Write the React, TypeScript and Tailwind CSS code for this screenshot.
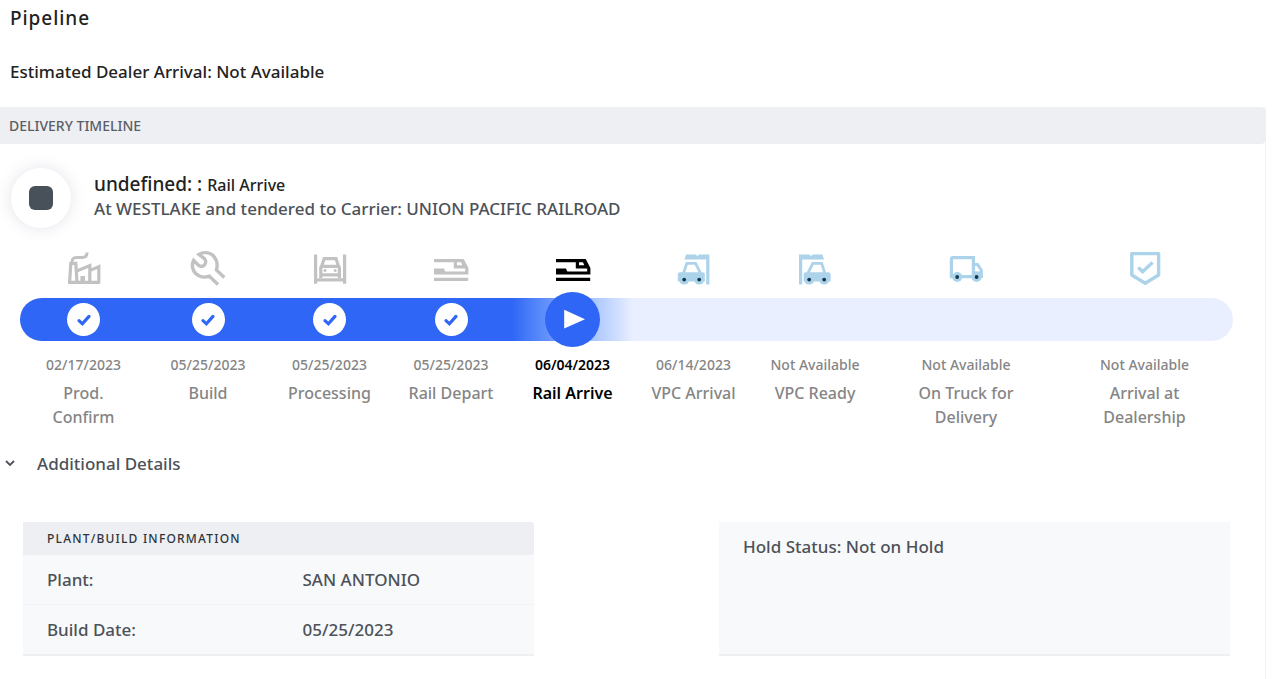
import type { ReactNode } from "react";

const iconClass = "h-9 w-9";

function FactoryIcon() {
  return (
    <svg viewBox="0 0 36 36" className={iconClass} fill="none" stroke="currentColor" strokeWidth="3.2" aria-hidden="true">
      <path d="M2 32.4H34.2M3.6 32.4L4.8 13.4H9.8L11 32.4M10.8 21L23.8 15.6V32.4M23.8 20.6L32.8 16.6V32.4" />
      <path d="M6.4 13.4C5.6 9.5 7 7.6 10 7.4H16.5C19.5 7.4 21 6 21 2.6" strokeWidth="3" />
      <path d="M14.4 26H19V32H14.4Z" fill="currentColor" stroke="none" />
    </svg>
  );
}

function WrenchIcon() {
  return (
    <svg viewBox="0 0 36 36" className={iconClass} fill="none" stroke="currentColor" strokeWidth="3.4" aria-hidden="true">
      <path d="M34.3 27.6L26.4 20C28.4 13 26 6.4 20.4 3.8C16.6 2.2 12.4 2.4 9 4.4L14.6 8.8C16.4 11 15.8 13.6 14.4 15C12.8 16.6 10.6 16.8 8.8 15.4L3.6 10.4C1.4 14.6 2.2 20.4 6 23.8C9.6 27 14.8 27.8 19.4 26.2L28 34.4" />
    </svg>
  );
}

function ProcessingIcon() {
  return (
    <svg viewBox="0 0 36 36" className={iconClass} fill="none" stroke="currentColor" strokeWidth="3.2" aria-hidden="true">
      <path d="M3.6 4.4V33.8M32.6 4.4V33.8M3.6 29.8H32.6" />
      <path d="M9.6 16.4L12.2 8.6H24L26.6 16.4M8.8 28V18C8.8 17 9.6 16.4 10.6 16.4H25.6C26.6 16.4 27.4 17 27.4 18V28M8.8 24.8H27.4" />
      <circle cx="13" cy="20.6" r="1.5" fill="currentColor" stroke="none" />
      <circle cx="23.2" cy="20.6" r="1.5" fill="currentColor" stroke="none" />
    </svg>
  );
}

function TrainIcon() {
  return (
    <svg viewBox="0 0 36 36" className={iconClass} fill="none" stroke="currentColor" strokeWidth="3.2" aria-hidden="true">
      <path d="M1 10.6H29.8L33.8 18.5V23H1" />
      <path d="M22.4 10.6V16.8H32M1 29.4H35.2" />
      <path d="M28.4 10.6L31 16.8" strokeWidth="2" />
      <path d="M1 18.6H11L12.4 22V24H1Z" fill="currentColor" stroke="none" />
    </svg>
  );
}

function CarBayShape() {
  return (
    <>
      <path d="M8.4 9.6L10 4.4H20L21.4 6.2L23 4.4H33.4V34.6H30.2V9.6Z" fill="currentColor" />
      <path d="M7.6 23L10.8 13.4H19.6L24.4 23" fill="none" stroke="currentColor" strokeWidth="2.8" />
      <path d="M1.8 31.6V24.5C1.8 23 2.8 22.2 4 22.2H26.4C28 22.2 28.8 23 28.8 24.5V31.6Z" fill="currentColor" />
      <circle cx="8.2" cy="29.6" r="5" fill="currentColor" />
      <circle cx="23.2" cy="29.6" r="5" fill="currentColor" />
      <circle cx="8.2" cy="29.6" r="1.9" fill="#12384f" />
      <circle cx="23.2" cy="29.6" r="1.9" fill="#12384f" />
    </>
  );
}

function ArrivalBayIcon() {
  return (
    <svg viewBox="0 0 36 36" className={iconClass} aria-hidden="true">
      <CarBayShape />
    </svg>
  );
}

function ReadyBayIcon() {
  return (
    <svg viewBox="0 0 36 36" className={iconClass} aria-hidden="true">
      <g transform="translate(35.4 0) scale(-1 1)">
        <CarBayShape />
      </g>
    </svg>
  );
}

function TruckIcon() {
  return (
    <svg viewBox="0 0 36 36" className={iconClass} aria-hidden="true">
      <path d="M8 26.6H3.4V9.4C3.4 8.2 4 7.7 5 7.7H25.4V26.6H8" fill="none" stroke="currentColor" strokeWidth="3.2" />
      <path d="M25.4 14.4H29.6L33.4 20.4V26.6H25.4" fill="none" stroke="currentColor" strokeWidth="3" />
      <path d="M26 21.4H34V27H26Z" fill="currentColor" />
      <circle cx="9.2" cy="27" r="5" fill="currentColor" />
      <circle cx="28.6" cy="27" r="5" fill="currentColor" />
      <circle cx="9.2" cy="27" r="1.9" fill="#12384f" />
      <circle cx="28.6" cy="27" r="1.9" fill="#12384f" />
    </svg>
  );
}

function ShieldIcon() {
  return (
    <svg viewBox="0 0 36 36" className={iconClass} fill="none" stroke="currentColor" strokeWidth="3.4" aria-hidden="true">
      <path d="M4.8 3.6H31.6V25L18.2 33.2L4.8 25Z" strokeLinejoin="round" />
      <path d="M11.2 17.6L15.6 21.6L25.6 12.6" />
    </svg>
  );
}

function CheckBadge() {
  return (
    <span className="flex size-[33px] items-center justify-center rounded-full bg-white text-[#2f66f5]">
      <svg viewBox="0 0 16 16" className="size-4" fill="none" stroke="currentColor" strokeWidth="3.2" role="img" aria-label="Completed">
        <path d="M3 8.6L6.4 11.8L13 4.4" strokeLinecap="round" />
      </svg>
    </span>
  );
}

function PlayBadge() {
  return (
    <span className="flex size-[55px] shrink-0 items-center justify-center rounded-full bg-[#2f66f5] text-white">
      <svg viewBox="0 0 24 24" className="size-6" fill="currentColor" role="img" aria-label="Current step">
        <path d="M3.2 1.8L24 11.2L3.2 20.6Z" />
      </svg>
    </span>
  );
}

type State = "done" | "current" | "upcoming";

const steps: { date: string; label: string; state: State; icon: ReactNode }[] = [
  { date: "02/17/2023", label: "Prod. Confirm", state: "done", icon: <FactoryIcon /> },
  { date: "05/25/2023", label: "Build", state: "done", icon: <WrenchIcon /> },
  { date: "05/25/2023", label: "Processing", state: "done", icon: <ProcessingIcon /> },
  { date: "05/25/2023", label: "Rail Depart", state: "done", icon: <TrainIcon /> },
  { date: "06/04/2023", label: "Rail Arrive", state: "current", icon: <TrainIcon /> },
  { date: "06/14/2023", label: "VPC Arrival", state: "upcoming", icon: <ArrivalBayIcon /> },
  { date: "Not Available", label: "VPC Ready", state: "upcoming", icon: <ReadyBayIcon /> },
  { date: "Not Available", label: "On Truck for Delivery", state: "upcoming", icon: <TruckIcon /> },
  { date: "Not Available", label: "Arrival at Dealership", state: "upcoming", icon: <ShieldIcon /> },
];

const iconColor: Record<State, string> = {
  done: "text-[#c2c2c2]",
  current: "text-black",
  upcoming: "text-[#acd3ea]",
};

const trackColor: Record<State, string> = {
  done: "bg-[#2f66f5]",
  current: "bg-linear-to-r from-[#2f66f5] to-[#e9effe]",
  upcoming: "bg-[#e9effe]",
};

function Timeline() {
  return (
    <ol className="grid grid-cols-[127fr_122fr_121fr_122fr_121fr_121fr_122fr_180fr_177fr] pr-8 pl-5">
      {steps.map((step) => (
        <li key={step.label} className="group flex flex-col items-center text-center">
          <span className={iconColor[step.state]}>{step.icon}</span>
          <div
            className={`mt-3 flex h-[43px] w-full items-center justify-center group-first:rounded-l-full group-last:rounded-r-full ${trackColor[step.state]}`}
          >
            {step.state === "done" && <CheckBadge />}
            {step.state === "current" && <PlayBadge />}
          </div>
          <div className={step.state === "current" ? "font-semibold text-black" : "text-[#858585]"}>
            <p className="mt-3 text-sm leading-6">{step.date}</p>
            <p className="mx-auto mt-1 max-w-[120px] px-2 text-base leading-6">{step.label}</p>
          </div>
        </li>
      ))}
    </ol>
  );
}

export default function App() {
  return (
    <main className="min-h-screen bg-white font-['Noto_Sans',sans-serif] font-medium text-[#4d5158]">
      <h1 className="px-[10px] pt-1 text-[19px] leading-7 tracking-wider text-[#222]">Pipeline</h1>
      <p className="mt-7 px-[10px] text-[17px] leading-6 text-[#222]">Estimated Dealer Arrival: Not Available</p>

      <section className="mt-[23px] mr-[13px] min-h-[572px] border-r border-[#f0f1f3]">
        <h2 className="rounded-r bg-[#eeeff3] px-[9px] py-2 text-sm leading-[21px] text-[#5a5e66]">DELIVERY TIMELINE</h2>

        <div className="mt-6 flex items-start gap-[23px] pl-[11px]">
          <span className="flex size-[60px] shrink-0 items-center justify-center rounded-full bg-white shadow-[0_0_16px_rgba(80,90,130,0.16)]">
            <span className="size-6 rounded-md bg-[#485059]" />
          </span>
          <div className="pt-[3px]">
            <p className="text-[19px] leading-[26px] text-[#222]">
              undefined: : <span className="text-base">Rail Arrive</span>
            </p>
            <p className="text-[17px] leading-6">At WESTLAKE and tendered to Carrier: UNION PACIFIC RAILROAD</p>
          </div>
        </div>

        <div className="mt-[22px]">
          <Timeline />
        </div>

        <details open className="mt-[23px]">
          <summary className="flex cursor-pointer list-none items-center gap-[21px] pl-1 text-[17px] leading-6">
            <svg viewBox="0 0 12 12" className="size-3" fill="none" stroke="currentColor" strokeWidth="1.8" aria-hidden="true">
              <path d="M2 3L6 7L10 3" />
            </svg>
            Additional Details
          </summary>

          <div className="mt-[46px] grid grid-cols-2 gap-[185px] pr-[35px] pl-[23px]">
            <div className="border-b-2 border-[#eeeff1] bg-[#f8f9fb]">
              <h3 className="rounded-r bg-[#eeeff3] px-6 py-1.5 text-xs leading-[21px] tracking-widest text-[#30343b]">
                PLANT/BUILD INFORMATION
              </h3>
              <table className="w-full table-fixed text-left text-[17px] leading-[25px]">
                <tbody>
                  <tr className="border-b border-[#f2f3f6]">
                    <th scope="row" className="px-6 py-3 font-medium">Plant:</th>
                    <td className="px-6 py-3">SAN ANTONIO</td>
                  </tr>
                  <tr>
                    <th scope="row" className="px-6 py-3 font-medium">Build Date:</th>
                    <td className="px-6 py-3">05/25/2023</td>
                  </tr>
                </tbody>
              </table>
            </div>
            <div className="border-b-2 border-[#eeeff1] bg-[#f8f9fb] px-6 py-3">
              <p className="text-[17px] leading-[25px]">Hold Status: Not on Hold</p>
            </div>
          </div>
        </details>
      </section>
    </main>
  );
}
